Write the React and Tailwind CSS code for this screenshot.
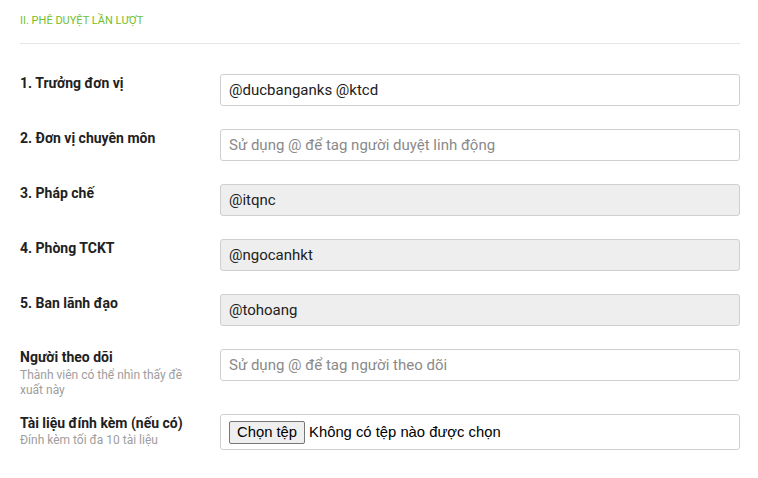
export default function App() {
  const rows = [
    { label: "1. Trưởng đơn vị", value: "@ducbanganks @ktcd", disabled: false },
    { label: "2. Đơn vị chuyên môn", placeholder: "Sử dụng @ để tag người duyệt linh động", disabled: false },
    { label: "3. Pháp chế", value: "@itqnc", disabled: true },
    { label: "4. Phòng TCKT", value: "@ngocanhkt", disabled: true },
    { label: "5. Ban lãnh đạo", value: "@tohoang", disabled: true },
  ];
  return (
    <div className="w-[758px] h-[478px] bg-white text-[#212121] font-['Roboto',sans-serif] px-5 pt-[14px]">
      <div className="text-[11px] leading-[13px] text-[#72c02c] uppercase">II. Phê duyệt lần lượt</div>
      <div className="mt-[16px] border-t border-[#e6e6e6] w-[720px]"></div>
      <div className="mt-[30px] flex flex-col gap-[23px] w-[720px]">
        {rows.map((r, i) => (
          <div key={i} className="flex">
            <div className="w-[200px] pt-[1px] text-[14px] leading-[16px] font-bold">{r.label}</div>
            <div
              className={`flex-1 h-[32px] border border-[#cfcfcf] rounded-[3px] px-[8px] flex items-center text-[15px] ${r.disabled ? "bg-[#eeeeee]" : "bg-white"}`}
            >
              {r.value ? <span className="text-[#212121]">{r.value}</span> : <span className="text-[#8a8a8a]">{r.placeholder}</span>}
            </div>
          </div>
        ))}
        <div className="flex">
          <div className="w-[200px]">
            <div className="text-[14px] leading-[16px] font-bold">Người theo dõi</div>
            <div className="mt-[3px] text-[12px] leading-[15px] text-[#9e9e9e] w-[178px]">Thành viên có thể nhìn thấy đề xuất này</div>
          </div>
          <div className="flex-1 h-[32px] border border-[#cfcfcf] rounded-[3px] px-[8px] flex items-center text-[15px] bg-white">
            <span className="text-[#8a8a8a]">Sử dụng @ để tag người theo dõi</span>
          </div>
        </div>
        <div className="flex -mt-[7px]">
          <div className="w-[200px] pt-[1px]">
            <div className="text-[14px] leading-[16px] font-bold">Tài liệu đính kèm (nếu có)</div>
            <div className="mt-[2px] text-[12px] leading-[15px] text-[#9e9e9e]">Đính kèm tối đa 10 tài liệu</div>
          </div>
          <div className="flex-1 h-[36px] border border-[#cfcfcf] rounded-[3px] px-[8px] flex items-center bg-white font-['Liberation_Sans',Arial,sans-serif] text-[14.8px] text-black">
            <span className="h-[23px] px-[7px] flex items-center bg-[#efefef] border border-[#767676] rounded-[2px] mr-[4px]">Chọn tệp</span>
            <span>Không có tệp nào được chọn</span>
          </div>
        </div>
      </div>
    </div>
  );
}
